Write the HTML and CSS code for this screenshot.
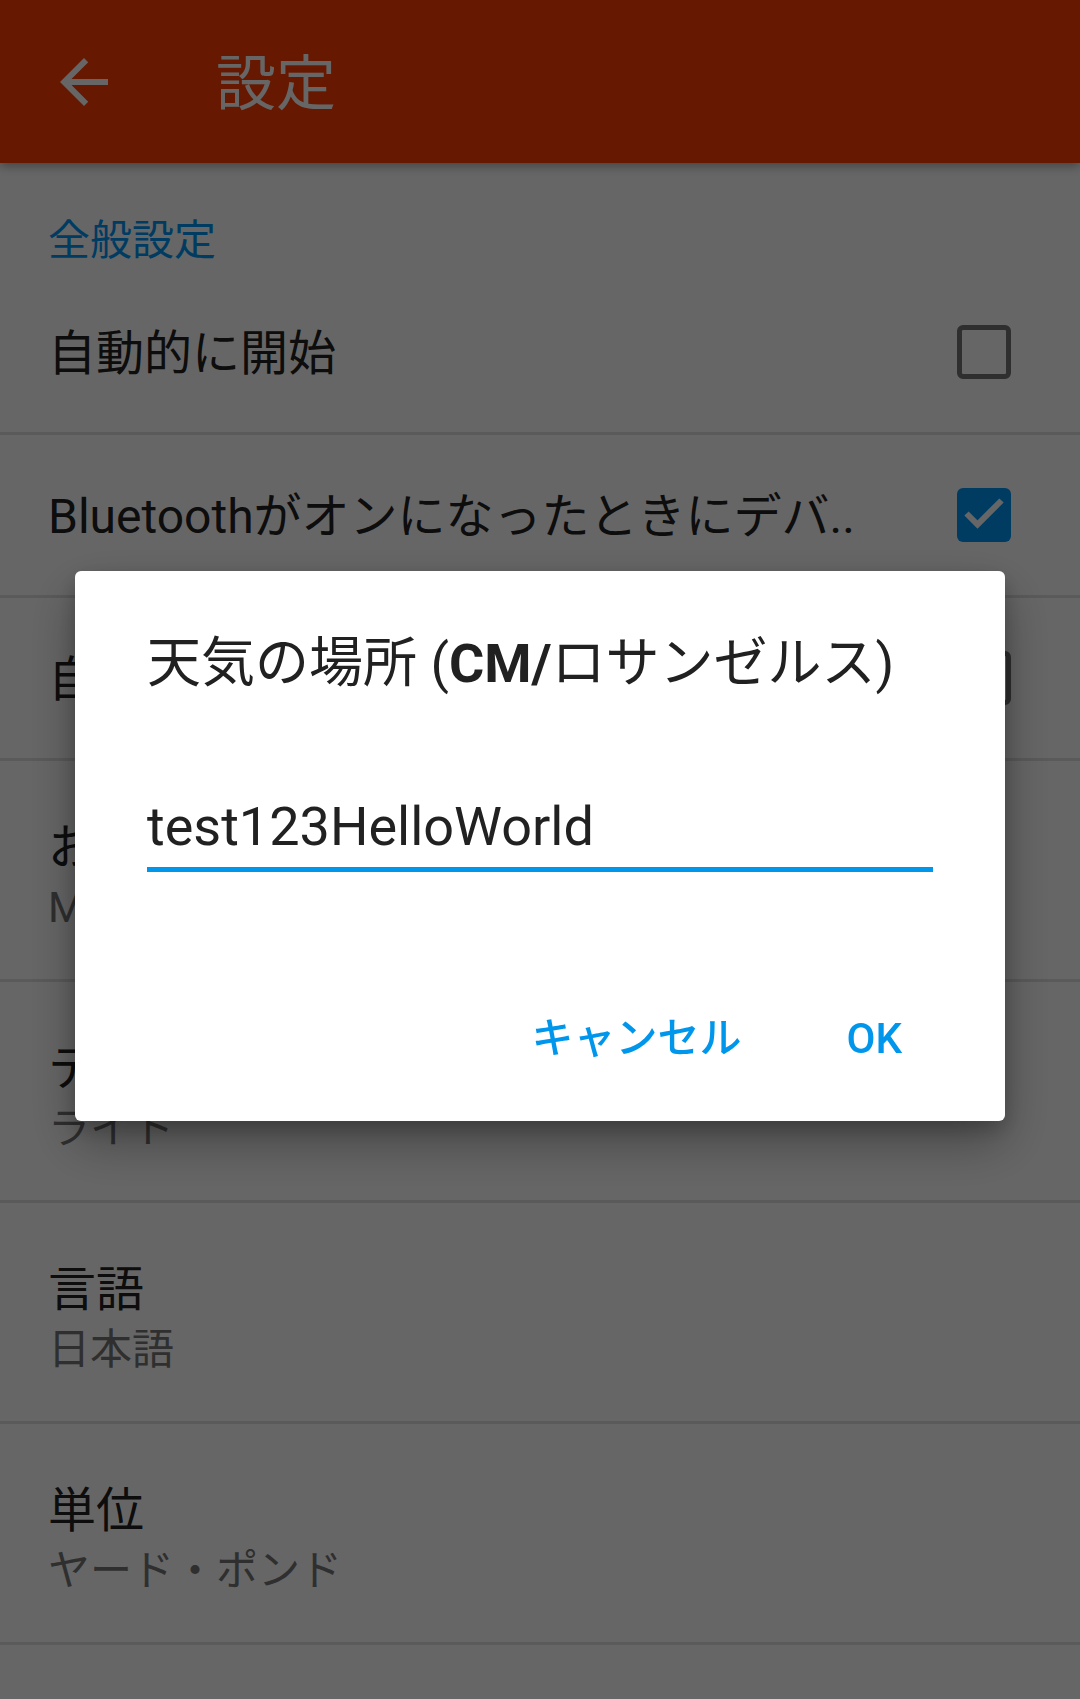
FILE: index.html
```html
<!DOCTYPE html>
<html lang="ja">
<head>
<meta charset="utf-8">
<title>設定</title>
<link rel="stylesheet" href="styles.css">
</head>
<body>
<div class="screen">
  <header class="appbar">
    <svg class="back" viewBox="0 0 24 24" aria-hidden="true"><path d="M20 11H7.83l5.59-5.59L12 4l-8 8 8 8 1.41-1.41L7.83 13H20v-2z"/></svg>
    <h1 class="appbar-title">設定</h1>
  </header>
  <main class="prefs">
    <div class="category">全般設定</div>
    <div class="pref">
      <div class="pref-text single"><div class="pref-title">自動的に開始</div></div>
      <span class="checkbox"></span>
    </div>
    <div class="pref">
      <div class="pref-text single"><div class="pref-title">Bluetoothがオンになったときにデバ..</div></div>
      <span class="checkbox checked"><svg viewBox="0 0 54 54" aria-hidden="true"><path d="M9.5 25.5L20.5 36.5L44.5 12.5"/></svg></span>
    </div>
    <div class="pref">
      <div class="pref-text single"><div class="pref-title">自動更新</div></div>
      <span class="checkbox"></span>
    </div>
    <div class="pref">
      <div class="pref-text double"><div class="pref-title">お気に入りの場所</div><div class="pref-summary">Mountain View</div></div>
    </div>
    <div class="pref">
      <div class="pref-text double"><div class="pref-title">テーマ</div><div class="pref-summary">ライト</div></div>
    </div>
    <div class="pref">
      <div class="pref-text double"><div class="pref-title">言語</div><div class="pref-summary">日本語</div></div>
    </div>
    <div class="pref">
      <div class="pref-text double"><div class="pref-title">単位</div><div class="pref-summary">ヤード・ポンド</div></div>
    </div>
  </main>
</div>
<div class="scrim">
  <div class="dialog">
    <h2 class="dialog-title">天気の場所 (<b>CM/</b>ロサンゼルス)</h2>
    <div class="field">
      <div class="field-value">test123HelloWorld</div>
      <div class="field-line"></div>
    </div>
    <div class="actions">
      <span class="btn">キャンセル</span>
      <span class="btn">OK</span>
    </div>
  </div>
</div>
</body>
</html>
```
FILE: styles.css
```css
* { box-sizing: border-box; }
html, body {
  margin: 0;
  padding: 0;
  width: 1080px;
  height: 1699px;
  background: #ffffff;
  font-family: Roboto, "Noto Sans CJK JP", sans-serif;
  overflow: hidden;
}
.screen {
  width: 1080px;
  height: 1699px;
  background: #ffffff;
}
.appbar {
  position: relative;
  z-index: 1;
  height: 163px;
  background: #ff3d00;
  display: flex;
  align-items: center;
  padding-left: 48px;
  box-shadow: 0 3px 10px rgba(0,0,0,0.35);
}
.back {
  width: 72px;
  height: 72px;
  fill: #ffffff;
  flex: none;
}
.appbar-title {
  margin: 7px 0 0 96px;
  font-size: 60px;
  line-height: 72px;
  font-weight: 400;
  color: #ffffff;
}
.category {
  padding: 53px 48px 6px;
  font-size: 42px;
  line-height: 50px;
  color: #0096f4;
}
.pref {
  display: flex;
  align-items: center;
  padding: 0 69px 0 48px;
  border-bottom: 3px solid #e0e0e0;
}
.pref-text {
  flex: 1;
  min-width: 0;
}
.pref-text.single {
  padding: 54px 0 50px;
}
.pref-text.double {
  padding: 59px 0 46px;
}
.pref-title {
  font-size: 48px;
  line-height: 56px;
  color: #212121;
  white-space: nowrap;
}
.pref-summary {
  margin-top: 7px;
  font-size: 42px;
  line-height: 50px;
  color: #757575;
  white-space: nowrap;
}
.checkbox {
  flex: none;
  width: 54px;
  height: 54px;
  border: 5px solid #757575;
  border-radius: 6px;
}
.checkbox.checked {
  border: none;
  background: #0096f4;
}
.checkbox svg {
  display: block;
  width: 54px;
  height: 54px;
  fill: none;
  stroke: #ffffff;
  stroke-width: 6;
}
.scrim {
  position: fixed;
  inset: 0;
  background: rgba(0,0,0,0.6);
  display: flex;
  align-items: center;
  justify-content: center;
  padding-bottom: 7px;
  z-index: 5;
}
.dialog {
  width: 930px;
  padding: 60px 72px 57px;
  background: #ffffff;
  border-radius: 6px;
  box-shadow: 0 22px 50px rgba(0,0,0,0.32), 0 8px 20px rgba(0,0,0,0.2);
}
.dialog-title {
  margin: 0;
  font-size: 54px;
  line-height: 66px;
  font-weight: 400;
  color: #212121;
  white-space: nowrap;
}
.dialog-title b {
  font-weight: 700;
}
.field {
  margin-top: 98px;
}
.field-value {
  font-size: 54px;
  line-height: 64px;
  color: #212121;
}
.field-line {
  margin-top: 8px;
  height: 5px;
  background: #0096ec;
}
.actions {
  margin-top: 142px;
  display: flex;
  justify-content: flex-end;
  gap: 105px;
  padding-right: 31px;
}
.btn {
  font-size: 42px;
  line-height: 50px;
  font-weight: 500;
  color: #0096ec;
}
```
